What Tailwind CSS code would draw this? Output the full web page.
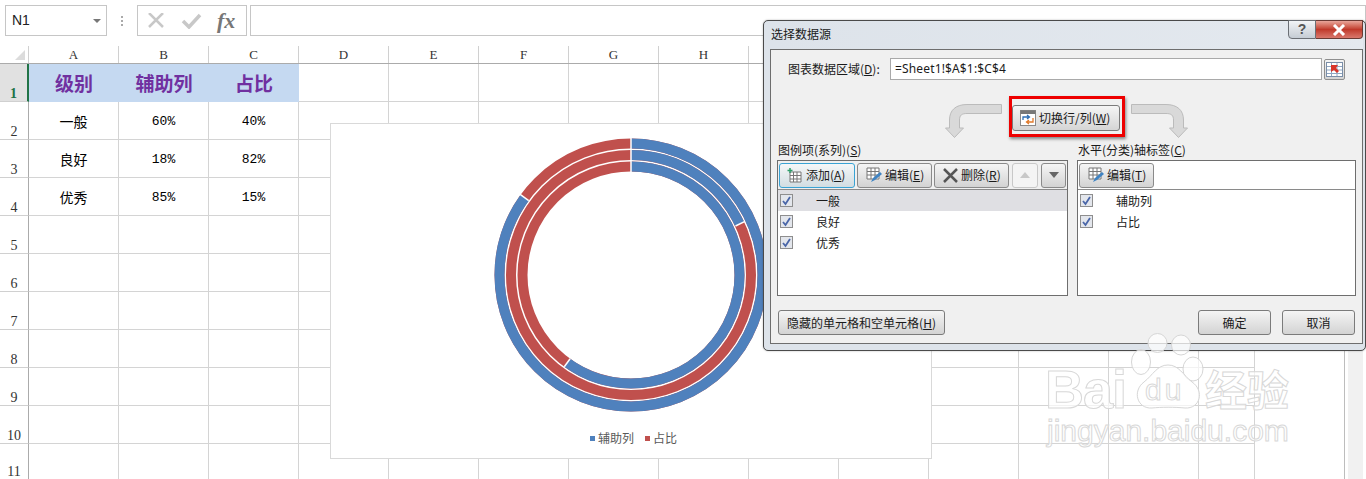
<!doctype html>
<html>
<head>
  <title>选择数据源</title>
  <meta charset="UTF-8">
  <script src="https://cdn.jsdelivr.net/npm/@tailwindcss/browser@4"></script>
</head>
<body class="bg-white overflow-hidden font-['Liberation_Sans','Noto_Sans_CJK_SC',sans-serif]">
  <div class="relative w-[1366px] h-[479px] overflow-hidden bg-white">

    <!-- formula bar -->
    <div class="flex items-stretch h-[46px] pt-[5px] pb-[10px] pl-[5px] bg-white">
      <div class="w-[102px] border border-[#c6c6c6] flex items-center justify-between pl-[6px] pr-[5px] text-[14px] text-[#222]">
        <span>N1</span>
        <span class="w-0 h-0 border-x-[4px] border-x-transparent border-t-[4px] border-t-[#777]"></span>
      </div>
      <div class="w-[30px] flex flex-col items-center justify-center gap-[2px]">
        <span class="w-[2px] h-[2px] bg-[#aaa]"></span><span class="w-[2px] h-[2px] bg-[#aaa]"></span><span class="w-[2px] h-[2px] bg-[#aaa]"></span>
      </div>
      <div class="w-[110px] border border-[#c6c6c6] flex items-center pl-[9px]">
        <svg width="20" height="16" viewBox="0 0 20 16"><path d="M2 0 L16 14 M16 0 L2 14" stroke="#c8c8c8" stroke-width="2.5" fill="none"/></svg>
        <svg class="ml-[14px]" width="22" height="16" viewBox="0 0 22 16"><path d="M2 8 L8 14 L19 2" stroke="#c8c8c8" stroke-width="3.5" fill="none"/></svg>
        <span class="ml-[14px] font-['Liberation_Serif'] italic font-bold text-[22px] leading-none text-[#777]">fx</span>
      </div>
      <div class="ml-[3px] flex-1 border border-[#c6c6c6]"></div>
    </div>

    <!-- sheet -->
    <div id="sheet" class="w-[1344px] font-['Liberation_Mono','Noto_Sans_CJK_SC',monospace] text-[13px] text-black"></div>
    <div class="absolute left-[1344px] top-[46px] bottom-0 w-[22px] border-l border-[#bdbdbd] pl-[3px] pr-[3px] bg-white"><div class="h-full bg-[#f1f1f1]"></div></div>

    <!-- chart -->
    <div class="absolute left-[330px] top-[123px] w-[602px] h-[336px] bg-white border border-[#d9d9d9]">
      <svg class="absolute left-[159px] top-[10px]" width="282" height="282" viewBox="-141 -141 282 282">
        <g fill="none" stroke-width="10" transform="rotate(-90)">
          <circle r="131.5" stroke="#c0504d"/>
          <circle r="131.5" stroke="#4f81bd" pathLength="100" stroke-dasharray="85 15"/>
          <circle r="120" stroke="#c0504d"/>
          <circle r="120" stroke="#4f81bd" pathLength="100" stroke-dasharray="18 82"/>
          <circle r="108.5" stroke="#c0504d"/>
          <circle r="108.5" stroke="#4f81bd" pathLength="100" stroke-dasharray="60 40"/>
        </g>
        <g stroke="#fff" stroke-width="1.5">
          <line x1="0" y1="-103" x2="0" y2="-137.5"/>
          <path d="M-102.3 -74.4 L-111.2 -80.8"/>
          <path d="M104.5 -49 L114 -53.6"/>
          <path d="M-60.9 83.8 L-66.7 91.8"/>
        </g>
      </svg>
      <div class="absolute left-0 right-0 top-[306px] pl-[5px] flex justify-center gap-[11px] text-[12px] leading-[16px] text-[#595959] font-['Noto_Sans_CJK_SC',sans-serif]">
        <span class="flex items-center gap-[3px]"><i class="w-[5px] h-[5px] bg-[#4f81bd]"></i>辅助列</span>
        <span class="flex items-center gap-[3px]"><i class="w-[5px] h-[5px] bg-[#c0504d]"></i>占比</span>
      </div>
    </div>

    <!-- dialog -->
    <div class="absolute left-[763px] top-[20px] w-[603px] h-[331px] flex flex-col bg-[#dde3ea] border border-[#4a4a4a] rounded-[5px] pl-[6px] pr-[2px] pb-[6px] shadow-[0_0_2px_rgba(0,0,0,0.3)] text-[12px] text-[#1a1a1a] font-['Noto_Sans_CJK_SC',sans-serif]">
      <div class="h-[28px] flex justify-between bg-gradient-to-r from-[#dde3ea] to-[#e4e9ef]">
        <span class="pl-[1px] pt-[5px] leading-[16px]">选择数据源</span>
        <div class="flex h-[19px] -mt-[1px]">
          <div class="w-[28px] bg-gradient-to-b from-[#f2f4f6] to-[#c5ccd4] border border-[#6b6f75] rounded-bl-[4px] flex items-center justify-center font-['Liberation_Sans'] font-bold text-[14px] text-[#555]">?</div>
          <div class="w-[47px] bg-gradient-to-b from-[#e8a59a] via-[#c0392b] to-[#d9776c] border-y border-r border-[#6b3a34] rounded-br-[4px] flex items-center justify-center">
            <svg width="14" height="12" viewBox="0 0 14 12"><path d="M2 1 L12 11 M12 1 L2 11" stroke="#fff" stroke-width="3"/></svg>
          </div>
        </div>
      </div>

      <div class="flex-1 bg-[#f0f0f0] border border-[#6e6e6e] px-[6px] flex flex-col">
        <div class="flex items-center h-[22px] mt-[8px]">
          <span class="w-[113px] pl-[11px] leading-[16px] whitespace-nowrap">图表数据区域(<u>D</u>):</span>
          <div class="w-[432px] h-[22px] bg-white border border-[#a9a9a9] pl-[4px] flex items-center font-['Noto_Sans',sans-serif] text-[12px] tracking-[0.15px]">=Sheet1!$A$1:$C$4</div>
          <div class="ml-[2px] w-[21px] h-[21px] bg-gradient-to-b from-[#f4f4f4] to-[#d4d4d4] border border-[#8e8e8e] rounded-[2px] flex items-center justify-center">
            <svg width="17" height="15" viewBox="0 0 17 15"><rect x="0.5" y="0.5" width="16" height="14" fill="#fff" stroke="#7a8ea8"/><path d="M1 4.5 H16 M1 8 H16 M1 11.5 H16 M5.5 1 V14 M11 1 V14" stroke="#8fa6c2"/><path d="M5 3 L12 3 L10 6 L13 9 L11 11 L8 8 L5 10 Z" fill="#d8352a"/></svg>
          </div>
        </div>

        <div class="h-[54px] mt-[5px] flex items-start">
          <svg class="ml-[168px] mt-[19px]" width="57" height="34" viewBox="0 0 57 34"><path d="M56.5 0.5 H22 C11 0.5 4.5 6 4.5 16 V24 H0.5 L9.5 33.5 L18.5 24 H14.5 V16 C14.5 11 17 9.5 22 9.5 H56.5 Z" fill="#d9d9d9" stroke="#bbb"/></svg>
          <div class="relative ml-[10px] mt-[20px] w-[108px] h-[26px] bg-gradient-to-b from-[#f5f5f5] to-[#d5d5d5] border border-[#7b7b7b] rounded-[3px] flex items-center gap-[3px] pl-[7px]">
            <div class="absolute -left-[4px] -right-[6px] -top-[10px] -bottom-[7px] border-[3px] border-[#ee0000] shadow-[1px_2px_3px_rgba(0,0,0,0.45)]"></div>
            <svg width="16" height="16" viewBox="0 0 16 16"><rect x="0.5" y="0.5" width="15" height="15" fill="#fff" stroke="#8a8a8a"/><rect x="0.5" y="0.5" width="15" height="3.5" fill="#777"/><path d="M3 10 V7 H9 M7 5 L9.5 7 L7 9" stroke="#2f6fb5" fill="none" stroke-width="1.3"/><path d="M13 8 V12 H7 M9 10 L6.5 12 L9 14" stroke="#e0792a" fill="none" stroke-width="1.3"/></svg>
            <span class="whitespace-nowrap">切换行/列(<u>W</u>)</span>
          </div>
          <svg class="ml-[11px] mt-[19px]" width="57" height="34" viewBox="0 0 57 34"><path d="M0.5 0.5 H35 C46 0.5 52.5 6 52.5 16 V24 H56.5 L47.5 33.5 L38.5 24 H42.5 V16 C42.5 11 40 9.5 35 9.5 H0.5 Z" fill="#d9d9d9" stroke="#bbb"/></svg>
        </div>

        <div class="flex gap-[9px] mt-[3px]">
          <!-- series list -->
          <div class="w-[291px]">
            <div class="leading-[16px] h-[18px] pl-[1px] whitespace-nowrap">图例项(系列)(<u>S</u>)</div>
            <div class="h-[136px] bg-white border border-[#6e6e6e]">
              <div class="h-[29px] border-b border-[#8a8a8a] flex items-center gap-[2px] pl-[1px] bg-[#f0f0f0]">
                <div class="w-[76px] h-[25px] bg-gradient-to-b from-[#f5f7f8] to-[#d2dde2] border border-[#3aa3d4] rounded-[3px] flex items-center gap-[2px] pl-[7px] whitespace-nowrap">
                  <svg width="15" height="15" viewBox="0 0 15 15"><path d="M3 4 H14 V14 H3 Z M3 7.5 H14 M3 11 H14 M6.5 4 V14 M10 4 V14" fill="#fff" stroke="#777"/><path d="M3 0 V5 M0.5 2.5 H5.5" stroke="#2e9e6b" stroke-width="1.5"/></svg>
                  <span class="ml-[2px]">添加(<u>A</u>)</span>
                </div>
                <div class="w-[75px] h-[25px] bg-gradient-to-b from-[#f5f5f5] to-[#d3d3d3] border border-[#8a8a8a] rounded-[3px] flex items-center pl-[8px] whitespace-nowrap">
                  <svg width="18" height="16" viewBox="0 0 18 16"><path d="M1 1 H13 V12 H1 Z M1 4.5 H13 M1 8 H13 M5 1 V12 M9 1 V12" fill="#fff" stroke="#777"/><path d="M5 15 L7 11 L14 5 L16 7 L9 13 Z" fill="#3f83c2"/></svg>
                  <span class="ml-[1px]">编辑(<u>E</u>)</span>
                </div>
                <div class="w-[75px] h-[25px] bg-gradient-to-b from-[#f5f5f5] to-[#d3d3d3] border border-[#8a8a8a] rounded-[3px] flex items-center pl-[8px] whitespace-nowrap">
                  <svg width="15" height="15" viewBox="0 0 15 15"><path d="M1 1 L14 14 M14 1 L1 14" stroke="#555" stroke-width="2.5"/></svg>
                  <span class="ml-[3px]">删除(<u>R</u>)</span>
                </div>
                <div class="ml-[1px] w-[26px] h-[25px] bg-[#f4f4f4] border border-[#c8c8c8] rounded-[3px] flex items-center justify-center"><span class="w-0 h-0 border-x-[5px] border-x-transparent border-b-[6px] border-b-[#c8c8c8]"></span></div>
                <div class="ml-[1px] w-[25px] h-[25px] bg-gradient-to-b from-[#f5f5f5] to-[#d3d3d3] border border-[#8a8a8a] rounded-[3px] flex items-center justify-center"><span class="w-0 h-0 border-x-[5px] border-x-transparent border-t-[6px] border-t-[#666]"></span></div>
              </div>
              <div class="h-[21px] flex items-center bg-[#dfdfe3] pl-[2px]">
                <svg width="13" height="13" viewBox="0 0 13 13"><rect x="0.5" y="0.5" width="12" height="12" fill="#e3e6ec" stroke="#8e8e8e"/><path d="M3 7 L5.5 10 L10 3" stroke="#4a66a8" stroke-width="1.8" fill="none"/></svg>
                <span class="ml-[23px] leading-[16px]">一般</span>
              </div>
              <div class="h-[21px] flex items-center pl-[2px]">
                <svg width="13" height="13" viewBox="0 0 13 13"><rect x="0.5" y="0.5" width="12" height="12" fill="#e3e6ec" stroke="#8e8e8e"/><path d="M3 7 L5.5 10 L10 3" stroke="#4a66a8" stroke-width="1.8" fill="none"/></svg>
                <span class="ml-[23px] leading-[16px]">良好</span>
              </div>
              <div class="h-[21px] flex items-center pl-[2px]">
                <svg width="13" height="13" viewBox="0 0 13 13"><rect x="0.5" y="0.5" width="12" height="12" fill="#e3e6ec" stroke="#8e8e8e"/><path d="M3 7 L5.5 10 L10 3" stroke="#4a66a8" stroke-width="1.8" fill="none"/></svg>
                <span class="ml-[23px] leading-[16px]">优秀</span>
              </div>
            </div>
          </div>
          <!-- category list -->
          <div class="w-[279px]">
            <div class="leading-[16px] h-[18px] pl-[1px] whitespace-nowrap">水平(分类)轴标签(<u>C</u>)</div>
            <div class="h-[136px] bg-white border border-[#6e6e6e]">
              <div class="h-[29px] border-b border-[#8a8a8a] flex items-center pl-[1px] bg-white">
                <div class="w-[75px] h-[25px] bg-gradient-to-b from-[#f5f5f5] to-[#d3d3d3] border border-[#8a8a8a] rounded-[3px] flex items-center pl-[8px] whitespace-nowrap">
                  <svg width="18" height="16" viewBox="0 0 18 16"><path d="M1 1 H13 V12 H1 Z M1 4.5 H13 M1 8 H13 M5 1 V12 M9 1 V12" fill="#fff" stroke="#777"/><path d="M5 15 L7 11 L14 5 L16 7 L9 13 Z" fill="#3f83c2"/></svg>
                  <span class="ml-[1px]">编辑(<u>T</u>)</span>
                </div>
              </div>
              <div class="h-[21px] flex items-center pl-[2px]">
                <svg width="13" height="13" viewBox="0 0 13 13"><rect x="0.5" y="0.5" width="12" height="12" fill="#e3e6ec" stroke="#8e8e8e"/><path d="M3 7 L5.5 10 L10 3" stroke="#4a66a8" stroke-width="1.8" fill="none"/></svg>
                <span class="ml-[23px] leading-[16px]">辅助列</span>
              </div>
              <div class="h-[21px] flex items-center pl-[2px]">
                <svg width="13" height="13" viewBox="0 0 13 13"><rect x="0.5" y="0.5" width="12" height="12" fill="#e3e6ec" stroke="#8e8e8e"/><path d="M3 7 L5.5 10 L10 3" stroke="#4a66a8" stroke-width="1.8" fill="none"/></svg>
                <span class="ml-[23px] leading-[16px]">占比</span>
              </div>
            </div>
          </div>
        </div>

        <div class="flex mt-[14px] pl-[1px]">
          <div class="w-[167px] h-[25px] bg-gradient-to-b from-[#f5f5f5] to-[#d3d3d3] border border-[#7b7b7b] rounded-[3px] flex items-center justify-center whitespace-nowrap">隐藏的单元格和空单元格(<u>H</u>)</div>
          <div class="ml-[253px] w-[73px] h-[25px] bg-gradient-to-b from-[#f5f5f5] to-[#d3d3d3] border border-[#7b7b7b] rounded-[3px] flex items-center justify-center">确定</div>
          <div class="ml-[11px] w-[73px] h-[25px] bg-gradient-to-b from-[#f5f5f5] to-[#d3d3d3] border border-[#7b7b7b] rounded-[3px] flex items-center justify-center">取消</div>
        </div>
      </div>
    </div>

    <!-- watermark -->
    <div class="absolute left-[1038px] top-[333px] w-[270px] h-[120px] pointer-events-none">
      <svg class="absolute left-[87px] top-0" width="85" height="78" viewBox="0 0 85 78">
        <g fill="#fff" fill-opacity="0.7" stroke="#d6d6d6" stroke-width="1">
          <ellipse cx="32.5" cy="10" rx="9.5" ry="9.5"/><ellipse cx="56" cy="12" rx="9.5" ry="10"/>
          <ellipse cx="16" cy="29" rx="9.5" ry="12.5"/><ellipse cx="68" cy="36" rx="10" ry="12"/>
          <path d="M43 32 C32 32 28 42 19 49 C7 58 12 76 27 75 C36 74 50 74 60 75 C75 76 80 58 67 49 C58 42 54 32 43 32 Z"/>
        </g>
      </svg>
      <span class="absolute left-[7px] top-[29px] font-['Liberation_Sans'] font-bold text-[54px] leading-[54px] tracking-[-1px] text-white/70 [-webkit-text-stroke:1px_#d8d8d8]">Bai</span>
      <span class="absolute left-[107px] top-[42px] font-['Liberation_Sans'] text-[30px] leading-[30px] tracking-[3px] text-white/70 [-webkit-text-stroke:1px_#d8d8d8]">du</span>
      <span class="absolute left-[167px] top-[34px] font-['Noto_Sans_CJK_SC'] font-bold text-[42px] leading-[42px] text-white/70 [-webkit-text-stroke:1px_#d8d8d8]">经验</span>
      <span class="absolute left-[9px] top-[83px] font-['Liberation_Sans'] text-[30px] leading-[30px] text-white/70 [-webkit-text-stroke:1px_#d8d8d8]">jingyan.baidu.com</span>
    </div>
  </div>

  <script>
    const letters = ['A','B','C','D','E','F','G','H','I','J','K','L','M','N'];
    const data = {
      1: ['级别','辅助列','占比'],
      2: ['一般','60%','40%'],
      3: ['良好','18%','82%'],
      4: ['优秀','85%','15%'],
    };
    let html = '<div class="grid grid-cols-[29px_repeat(13,90px)_56px] h-[18px] border-b border-[#ababab] text-[#333]">';
    html += '<div class="border-r border-[#d0d0d0] relative"><span class="absolute right-[3px] bottom-[3px] w-0 h-0 border-l-[10px] border-l-transparent border-b-[10px] border-b-[#dcdcdc]"></span></div>';
    letters.forEach(l => { html += `<div class="border-r border-[#d0d0d0] flex items-center justify-center font-['Liberation_Serif'] text-[13px] leading-none">${l}</div>`; });
    html += '</div>';
    for (let r = 1; r <= 11; r++) {
      // last row is cut by the window, so it only gets what is left of the height
      const rowCls = r === 11
        ? 'grid grid-cols-[29px_repeat(13,90px)_56px] h-[35px]'
        : 'grid grid-cols-[29px_repeat(13,90px)_56px] h-[38px]';
      const head = r === 1
        ? 'border-r-2 border-r-[#217346] bg-[#e1e1e1] text-[#217346] font-bold border-b border-b-[#d0d0d0]'
        : r === 11
          ? 'border-r border-r-[#ababab] text-[#333]'
          : 'border-r border-r-[#ababab] text-[#333] border-b border-b-[#d0d0d0]';
      html += `<div class="${rowCls}"><div class="${head} flex items-end justify-center leading-none text-[14px] font-['Liberation_Serif']">${r}</div>`;
      letters.forEach((l, c) => {
        const txt = data[r] && data[r][c] ? data[r][c] : '';
        if (r === 11) {
          html += '<div class="border-r border-[#d4d4d4]"></div>';
        } else if (r === 1 && c < 3) {
          html += `<div class="bg-[#c5d9f1] flex items-center justify-center text-[19px] font-bold text-[#7030a0] font-['Noto_Sans_CJK_SC',sans-serif]">${txt}</div>`;
        } else if (c === 0) {
          html += `<div class="border-r border-b border-[#d4d4d4] flex items-center justify-center pt-[2px] text-[14px] font-['Noto_Sans_CJK_SC',sans-serif]">${txt}</div>`;
        } else {
          html += `<div class="border-r border-b border-[#d4d4d4] flex items-center justify-center pt-[2px]">${txt}</div>`;
        }
      });
      html += '</div>';
    }
    document.getElementById('sheet').innerHTML = html;
  </script>
</body>
</html>
